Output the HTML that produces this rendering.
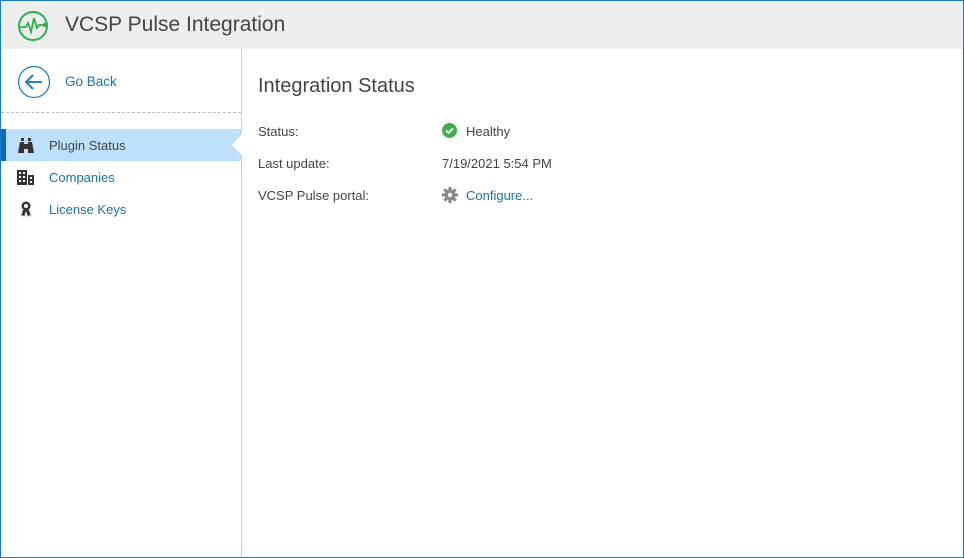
<!DOCTYPE html>
<html><head><style>
*{margin:0;padding:0;box-sizing:border-box}
body{width:964px;height:558px;overflow:hidden;font-family:"Liberation Sans",sans-serif;background:#fff}
#f{position:absolute;left:0;top:0;width:964px;height:558px;border:1px solid #1a7bc4}
#h{position:absolute;left:1px;top:1px;width:962px;height:48px;background:#eeeeee}
#h .t{position:absolute;left:64px;top:12px;font-size:21px;color:#444}
#sb{position:absolute;left:1px;top:49px;width:241px;height:508px;border-right:1px solid #cfcfcf}
.gb{position:absolute;left:64px;top:25px;font-size:13.5px;color:#1a72b0}
.dash{position:absolute;left:0;top:63px;width:240px;border-top:1px dashed #bbb}
.it{position:absolute;left:0;width:240px;height:32px;font-size:13px;color:#1a72b0}
.it span{position:absolute;left:48px;top:9px}
.sel{background:#bde0fb}
.sel span{color:#444}
.lab{position:absolute;left:258px;font-size:13px;color:#444}
.val{position:absolute;left:466px;font-size:13px;color:#444}
</style></head><body>
<div id="f"></div>
<div id="h">
<svg style="position:absolute;left:16px;top:9px" width="32" height="32" viewBox="0 0 32 32"><circle cx="16" cy="16" r="14" fill="none" stroke="#2ab14a" stroke-width="2"/><path d="M3 17h6l2-4 3 9 3-14 3 10 2-3h5" fill="none" stroke="#2ab14a" stroke-width="1.8"/><circle cx="28" cy="15" r="2.3" fill="#2ab14a"/></svg>
<div class="t">VCSP Pulse Integration</div></div>
<div id="sb">
<svg style="position:absolute;left:16px;top:16px" width="34" height="34" viewBox="0 0 34 34"><circle cx="17" cy="17" r="15.5" fill="none" stroke="#2a7db8" stroke-width="1.3"/><path d="M25 17H9M16 10l-7 7 7 7" fill="none" stroke="#2a7db8" stroke-width="2"/></svg>
<div class="gb">Go Back</div>
<div class="dash"></div>
<div class="it sel" style="top:80px"><div style="position:absolute;left:0;top:0;width:5px;height:32px;background:#0f6cb0"></div>
<svg style="position:absolute;left:17px;top:9px" width="16" height="15" viewBox="0 0 16 15"><path d="M2 4h4v2h4V4h4l2 11h-6v-4H6v4H0z M3 0h3v3H3z M10 0h3v3h-3z" fill="#333"/></svg>
<span>Plugin Status</span>
<svg style="position:absolute;left:230px;top:4px" width="12" height="24" viewBox="0 0 12 24"><path d="M12 0L0 12l12 12z" fill="#fff"/><path d="M11 0L0 12l11 12" fill="none" stroke="#cfcfcf"/></svg></div>
<div class="it" style="top:112px">
<svg style="position:absolute;left:16px;top:9px" width="17" height="15" viewBox="0 0 17 15"><path d="M0 0h10v15H0zM11 5h6v10h-6z" fill="#333"/><path d="M2 2h2v2H2zM6 2h2v2H6zM2 6h2v2H2zM6 6h2v2H6zM2 10h2v2H2zM6 10h2v2H6zM13 7h2v2h-2zM13 11h2v2h-2z" fill="#fff"/></svg>
<span>Companies</span></div>
<div class="it" style="top:144px">
<svg style="position:absolute;left:19px;top:8px" width="12" height="16" viewBox="0 0 12 16"><circle cx="6" cy="5" r="4.5" fill="#333"/><circle cx="6" cy="5" r="2" fill="#fff"/><path d="M3 9l-2 6 2-1 1 2 2-6 2 6 1-2 2 1-2-6z" fill="#333"/></svg>
<span>License Keys</span></div>
</div>
<div style="position:absolute;left:258px;top:75px;font-size:20px;color:#444">Integration Status</div>
<div class="lab" style="top:124px">Status:</div>
<div class="lab" style="top:156px">Last update:</div>
<div class="lab" style="top:188px">VCSP Pulse portal:</div>
<svg style="position:absolute;left:442px;top:123px" width="15" height="15" viewBox="0 0 15 15"><circle cx="7.5" cy="7.5" r="7.5" fill="#3cb04a"/><path d="M4 7.5l2.5 2.5 4.5-4.5" fill="none" stroke="#fff" stroke-width="2"/></svg>
<div class="val" style="top:124px">Healthy</div>
<div class="val" style="top:156px;left:442px">7/19/2021 5:54 PM</div>
<svg style="position:absolute;left:442px;top:187px" width="16" height="16" viewBox="0 0 16 16"><g fill="#888"><circle cx="8" cy="8" r="5.5"/><rect x="6.5" y="0" width="3" height="16"/><rect x="0" y="6.5" width="16" height="3"/><rect x="6.5" y="0" width="3" height="16" transform="rotate(45 8 8)"/><rect x="6.5" y="0" width="3" height="16" transform="rotate(-45 8 8)"/></g><circle cx="8" cy="8" r="2.2" fill="#fff"/></svg>
<div class="val" style="top:188px;color:#1a72b0">Configure...</div>
</body></html>
